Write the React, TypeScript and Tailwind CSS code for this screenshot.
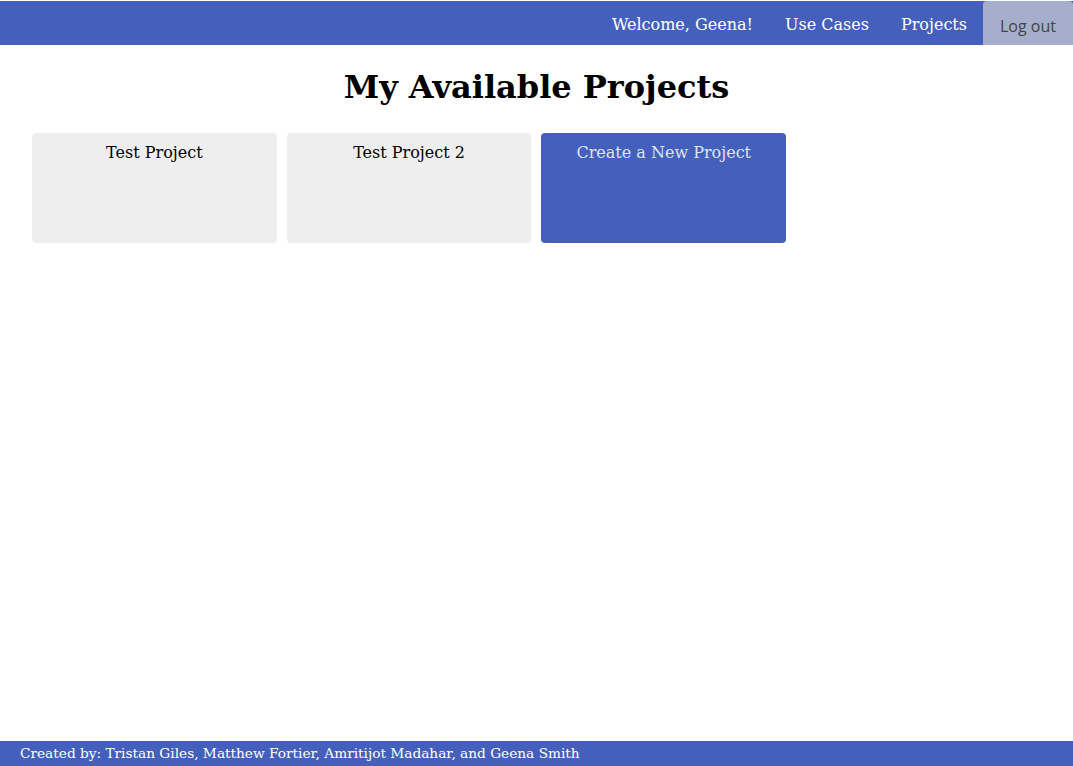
const serif = "font-['DejaVu_Serif',serif]";

function Navbar() {
  return (
    <nav className="mt-px flex h-[44px] items-stretch justify-end bg-[#4560bc] text-white">
      <a className="flex items-center px-4 pt-[3px] text-[16px]">Welcome, Geena!</a>
      <a className="flex items-center px-4 pt-[3px] text-[16px]">Use Cases</a>
      <a className="flex items-center px-4 pt-[3px] text-[16px]">Projects</a>
      <button className="flex w-[90px] items-center justify-center rounded-t-[4px] bg-[#a6aecb] pt-[5px] font-['Open_Sans',sans-serif] text-[16px] text-[#444]">
        Log out
      </button>
    </nav>
  );
}

function ProjectCard({ title, create }: { title: string; create?: boolean }) {
  return (
    <div
      className={
        "h-[110px] w-[244.7px] rounded-[4px] pt-[8px] text-center text-[16px] " +
        (create ? "bg-[#4560bc] text-[#dfe3f3]" : "bg-[#eeeeee] text-black")
      }
    >
      {title}
    </div>
  );
}

export default function App() {
  return (
    <div className={"flex min-h-screen flex-col bg-white " + serif}>
      <Navbar />
      <main className="flex-1">
        <h1 className="mt-[22px] text-center text-[32px] font-bold leading-[40px]">My Available Projects</h1>
        <div className="mt-[26px] flex gap-[10px] px-[32px]">
          <ProjectCard title="Test Project" />
          <ProjectCard title="Test Project 2" />
          <ProjectCard title="Create a New Project" create />
        </div>
      </main>
      <footer className="flex h-[25px] items-center bg-[#4560bc] px-[20px] text-[13.7px] text-white">
        Created by: Tristan Giles, Matthew Fortier, Amritijot Madahar, and Geena Smith
      </footer>
    </div>
  );
}
